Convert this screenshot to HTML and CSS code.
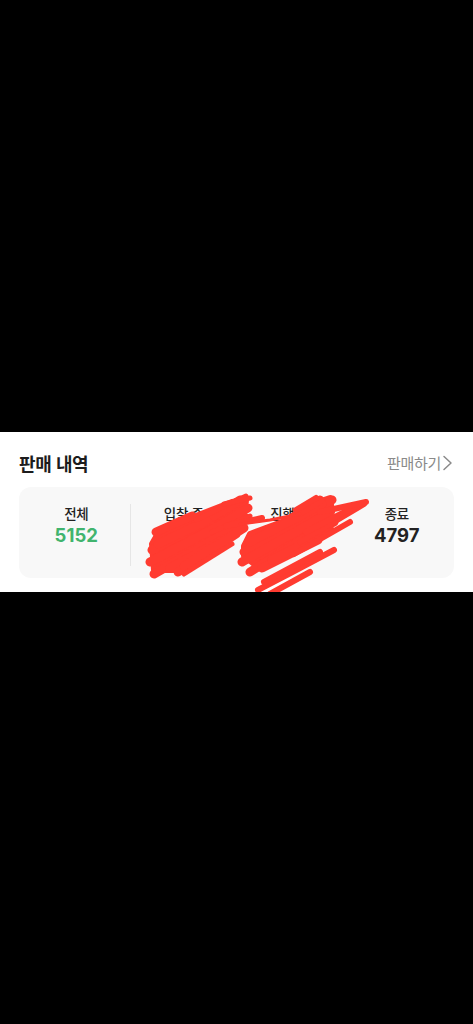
FILE: index.html
```html
<!DOCTYPE html>
<html lang="ko">
<head>
<meta charset="utf-8">
<link rel="stylesheet" href="styles.css">
</head>
<body>
<div class="page">
  <section class="panel">
    <div class="head">
      <h2 class="title">판매 내역</h2>
      <a class="more">판매하기<svg class="chev" width="12" height="16" viewBox="0 0 12 16"><path d="M2 1.5 L9 8 L2 14.5" fill="none" stroke="#8a8a8a" stroke-width="1.5" stroke-linecap="round" stroke-linejoin="round"/></svg></a>
    </div>
    <div class="card">
      <div class="col first"><div class="label">전체</div><div class="value green">5152</div></div>
      <div class="col"><div class="label">입찰 중</div><div class="value"></div></div>
      <div class="col"><div class="label">진행 중</div><div class="value"></div></div>
      <div class="col"><div class="label">종료</div><div class="value">4797</div></div>
    </div>
    <svg class="scribble" width="473" height="160" viewBox="0 0 473 160">
      <g fill="#ff3b30" stroke="#ff3b30" stroke-linecap="round" stroke-linejoin="round">
        <path stroke-width="6" d="M152 112 L160 98 L196 84 L232 70 L246 68 L244 80 L226 96 L214 112 L196 128 L174 138 L154 138 Z"/>
        <path stroke-width="6" d="M244 114 L250 102 L282 90 L312 72 L330 66 L332 80 L318 96 L300 112 L276 128 L254 132 L244 124 Z"/>
      </g>
      <g fill="none" stroke="#ff3b30" stroke-linecap="round" stroke-linejoin="round">
        <g stroke-width="9">
          <path d="M152 118 L210 88 L244 70"/>
          <path d="M150 130 L215 96 L248 76"/>
          <path d="M154 142 L220 104 L246 86"/>
          <path d="M158 112 L200 92 L232 74"/>
          <path d="M156 100 L192 84"/>
          <path d="M170 136 L226 106"/>
          <path d="M178 140 L236 102"/>
          <path d="M184 134 L244 96"/>
          <path d="M214 84 L240 68"/>
        </g>
        <g stroke-width="5">
          <path d="M196 88 L246 64"/>
          <path d="M224 72 L250 66"/>
          <path d="M184 142 L232 112"/>
          <path d="M212 100 L250 84"/>
        </g>
        <g stroke-width="9">
          <path d="M244 120 L300 88 L332 68"/>
          <path d="M242 130 L306 94 L330 80"/>
          <path d="M250 110 L300 84 L322 72"/>
          <path d="M250 140 L314 100 L334 90"/>
          <path d="M262 136 L318 108"/>
          <path d="M272 128 L330 98"/>
          <path d="M300 80 L320 68"/>
        </g>
        <g stroke-width="6">
          <path d="M300 110 L364 72"/>
          <path d="M306 100 L360 72"/>
          <path d="M294 122 L350 90"/>
          <path d="M258 158 L300 136 L334 118"/>
          <path d="M264 150 L320 120"/>
          <path d="M270 162 L310 140"/>
          <path d="M296 78 L316 66"/>
          <path d="M226 94 L262 86"/>
          <path d="M320 80 L366 70"/>
        </g>
        <path stroke-width="3" d="M240 92 L270 88 L300 82"/>
      </g>
    </svg>
  </section>
</div>
</body>
</html>
```

FILE: styles.css
```css
html, body {
  margin: 0;
  padding: 0;
  background: #000;
}
body {
  font-family: "Noto Sans CJK KR", "Noto Sans", sans-serif;
}
.page {
  width: 473px;
  height: 1024px;
  padding-top: 432px;
  box-sizing: border-box;
}
.panel {
  position: relative;
  overflow: hidden;
  background: #fff;
  height: 160px;
  box-sizing: border-box;
  padding: 18px 19px 0 19px;
}
.head {
  display: flex;
  justify-content: space-between;
  align-items: center;
  height: 26px;
}
.title {
  margin: 0;
  font-size: 18px;
  font-weight: 700;
  color: #1c1c1c;
  letter-spacing: -0.4px;
  line-height: 26px;
}
.more {
  display: flex;
  align-items: center;
  font-size: 15px;
  color: #8a8a8a;
  letter-spacing: -0.3px;
  line-height: 20px;
}
.chev {
  margin-left: 1px;
}
.card {
  margin-top: 11px;
  height: 91px;
  box-sizing: border-box;
  background: #f8f8f8;
  border-radius: 12px;
  padding: 17px 4px 0 4px;
  display: flex;
}
.col {
  flex: 1;
  height: 62px;
  display: flex;
  flex-direction: column;
  align-items: center;
  box-sizing: border-box;
}
.col.first {
  border-right: 1px solid #e6e6e6;
}
.label {
  font-size: 13.5px;
  line-height: 18px;
  color: #222;
  font-weight: 500;
  letter-spacing: -0.3px;
}
.value {
  margin-top: 1px;
  min-height: 24px;
  font-family: Inter, "Noto Sans", sans-serif;
  font-size: 18.5px;
  line-height: 24px;
  font-weight: 700;
  color: #222;
}
.value.green {
  color: #41b46e;
}
.scribble {
  position: absolute;
  left: 0;
  top: 0;
}
```
